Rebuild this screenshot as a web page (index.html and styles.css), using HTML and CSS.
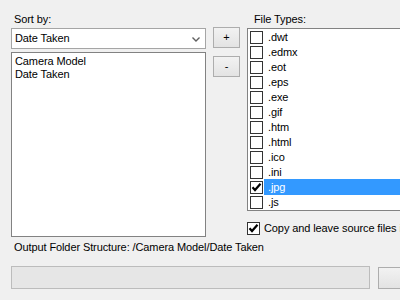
FILE: index.html
```html
<!DOCTYPE html>
<html lang="en">
<head>
  <meta charset="UTF-8">
  <title>Organize Files</title>
  <link rel="stylesheet" href="styles.css">
</head>
<body>
  <div class="top">
    <div class="sort-col">
      <div class="label">Sort by:</div>
      <div class="combo">
        <span>Date Taken</span>
        <svg class="chevron" width="8" height="5" viewBox="0 0 8 5"><polyline points="0.5,0.5 4,4 7.5,0.5" fill="none" stroke="#606060" stroke-width="1.4"/></svg>
      </div>
      <div class="list">
        <div class="list-item">Camera Model</div>
        <div class="list-item">Date Taken</div>
      </div>
    </div>

    <div class="btn-col">
      <div class="button small">+</div>
      <div class="button small">-</div>
    </div>

    <div class="types-col">
      <div class="label indent">File Types:</div>
      <div class="checklist">
        <div class="check-item"><span class="box"></span><span class="name">.dwt</span></div>
        <div class="check-item"><span class="box"></span><span class="name">.edmx</span></div>
        <div class="check-item"><span class="box"></span><span class="name">.eot</span></div>
        <div class="check-item"><span class="box"></span><span class="name">.eps</span></div>
        <div class="check-item"><span class="box"></span><span class="name">.exe</span></div>
        <div class="check-item"><span class="box"></span><span class="name">.gif</span></div>
        <div class="check-item"><span class="box"></span><span class="name">.htm</span></div>
        <div class="check-item"><span class="box"></span><span class="name">.html</span></div>
        <div class="check-item"><span class="box"></span><span class="name">.ico</span></div>
        <div class="check-item"><span class="box"></span><span class="name">.ini</span></div>
        <div class="check-item selected">
          <span class="box"><svg width="11" height="11" viewBox="0 0 11 11"><polyline points="1.5,5.3 4,8 9.5,1.8" fill="none" stroke="#000" stroke-width="2.2"/></svg></span>
          <span class="name">.jpg</span>
        </div>
        <div class="check-item"><span class="box"></span><span class="name">.js</span></div>
      </div>
      <div class="copy-row">
        <span class="box"><svg width="11" height="11" viewBox="0 0 11 11"><polyline points="1.5,5.3 4,8 9.5,1.8" fill="none" stroke="#000" stroke-width="2.2"/></svg></span>
        <span>Copy and leave source files in place</span>
      </div>
    </div>
  </div>

  <div class="output">Output Folder Structure: /Camera Model/Date Taken</div>

  <div class="bottom">
    <div class="progress"></div>
    <div class="button wide"></div>
  </div>
</body>
</html>
```

FILE: styles.css
```css
body {
  margin: 0;
  width: 400px;
  height: 300px;
  overflow: hidden;
  background-color: #f0f0f0;
  color: #000;
  font-family: "Liberation Sans", Arial, sans-serif;
  font-size: 11px;
  line-height: 13px;
  letter-spacing: -0.1px;
}
.top {
  display: flex;
  padding: 13px 0 0 11px;
}
.sort-col {
  flex: none;
  width: 195px;
  display: flex;
  flex-direction: column;
}
.label {
  height: 13px;
  margin-bottom: 2px;
  padding-left: 3px;
}
.label.indent {
  padding-left: 7px;
}
.combo {
  display: flex;
  align-items: center;
  justify-content: space-between;
  height: 21px;
  box-sizing: border-box;
  padding: 0 5px 0 3px;
  margin-bottom: 3px;
  background-color: #fff;
  border: 1px solid #a5a5a5;
}
.chevron {
  margin-top: 1px;
}
.list {
  height: 185px;
  box-sizing: border-box;
  padding: 2px 3px;
  background-color: #fff;
  border: 1px solid #828282;
}
.btn-col {
  flex: none;
  width: 27px;
  margin-left: 7px;
  padding-top: 14px;
  display: flex;
  flex-direction: column;
  gap: 8px;
}
.button {
  display: flex;
  align-items: center;
  justify-content: center;
  box-sizing: border-box;
  background: linear-gradient(#f2f2f2, #e3e3e3);
  border: 1px solid #adadad;
}
.button.small {
  height: 21px;
}
.types-col {
  flex: none;
  width: 200px;
  margin-left: 7px;
}
.checklist {
  height: 183px;
  box-sizing: border-box;
  padding-top: 1px;
  background-color: #fff;
  border: 1px solid #828282;
}
.check-item {
  display: flex;
  align-items: center;
  height: 15px;
  line-height: 15px;
}
.check-item .box {
  margin-left: 2px;
}
.box {
  flex: none;
  width: 13px;
  height: 13px;
  box-sizing: border-box;
  display: flex;
  align-items: center;
  justify-content: center;
  background-color: #fff;
  border: 1px solid #333;
}
.name {
  flex: 1;
  margin-left: 1px;
  padding-left: 4px;
}
.selected .name {
  background-color: #3399ff;
  color: #fff;
  height: 16px;
  line-height: 16px;
  margin-top: -2px;
}
.copy-row {
  display: flex;
  align-items: center;
  gap: 4px;
  margin-top: 11px;
  white-space: nowrap;
}
.output {
  margin-top: 4px;
  padding-left: 14px;
}
.bottom {
  display: flex;
  gap: 8px;
  margin-top: 12px;
  padding-left: 11px;
}
.progress {
  flex: none;
  width: 359px;
  height: 23px;
  box-sizing: border-box;
  background-color: #e6e6e6;
  border: 1px solid #bcbcbc;
}
.button.wide {
  flex: none;
  width: 75px;
  height: 22px;
  margin-top: 1px;
}
```
